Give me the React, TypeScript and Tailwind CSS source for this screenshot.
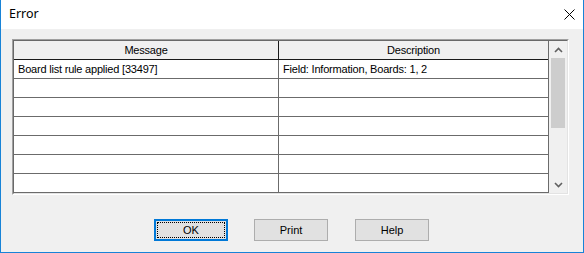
import React from 'react';

const rows = [
  { message: 'Board list rule applied [33497]', description: 'Field: Information, Boards: 1, 2' },
  { message: '', description: '' },
  { message: '', description: '' },
  { message: '', description: '' },
  { message: '', description: '' },
  { message: '', description: '' },
  { message: '', description: '' },
];

const uiFont = { fontFamily: '"Liberation Sans", Arial, sans-serif' };

const Chevron: React.FC<{ down?: boolean }> = ({ down }) => (
  <svg width="9" height="6" viewBox="0 0 9 6" className={down ? 'rotate-180' : ''}>
    <path d="M1 5 L4.5 1.5 L8 5" fill="none" stroke="#606060" strokeWidth="1.6" />
  </svg>
);

const DialogButton: React.FC<{ label: string; focused?: boolean; className?: string }> = ({ label, focused, className = '' }) => {
  if (focused) {
    return (
      <div className={`w-[74px] h-[22px] border-2 border-[#0078d7] bg-[#e1e1e1] p-px ${className}`}>
        <div className="w-full h-full border border-dotted border-black flex items-center justify-center text-[11px] text-black">
          {label}
        </div>
      </div>
    );
  }
  return (
    <div className={`w-[74px] h-[22px] border border-[#adadad] bg-[#e1e1e1] flex items-center justify-center text-[11px] text-black ${className}`}>
      {label}
    </div>
  );
};

export default function App() {
  return (
    <div
      className="w-[584px] h-[253px] flex flex-col border-x border-b border-[#1883d7] bg-[#f0f0f0] overflow-hidden"
      style={uiFont}
    >
      {/* Title bar */}
      <div className="h-[29px] shrink-0 bg-white flex items-center justify-between pl-[8px] pr-[7px]">
        <span className="text-[12.5px] text-black" style={{ fontFamily: '"Noto Sans", sans-serif' }}>
          Error
        </span>
        <svg width="11" height="11" viewBox="0 0 11 11" className="mr-[1px]">
          <path d="M0.5 0.5 L10.5 10.5 M10.5 0.5 L0.5 10.5" stroke="#000" strokeWidth="1" />
        </svg>
      </div>

      {/* List */}
      <div className="pl-[11px] pt-[10px]">
        <div className="w-[557px] h-[156px] border-t border-l border-t-[#a0a0a0] border-l-[#a0a0a0] border-b border-r border-b-white border-r-white">
          <div className="w-full h-full flex border-t border-l border-t-[#696969] border-l-[#696969] border-b border-r border-b-[#e3e3e3] border-r-[#e3e3e3]">
            <div className="w-[535px] flex flex-col border-r border-[#6b6b6b] bg-white text-[11px] tracking-[-0.2px] text-black">
              <div className="h-[19px] flex bg-[#f0f0f0] border-b border-[#1a1a1a]">
                <div className="w-[265px] border-r border-[#1a1a1a] flex items-center justify-center">Message</div>
                <div className="flex-1 flex items-center justify-center">Description</div>
              </div>
              {rows.map((row, i) => (
                <div key={i} className="h-[19px] flex border-b border-[#6b6b6b]">
                  <div className="w-[265px] border-r border-[#6b6b6b] flex items-center pl-[4px]">{row.message}</div>
                  <div className="flex-1 flex items-center pl-[4px]">{row.description}</div>
                </div>
              ))}
            </div>

            {/* Scrollbar */}
            <div className="flex-1 flex flex-col bg-[#f0f0f0]">
              <div className="h-[17px] flex items-center justify-center">
                <Chevron />
              </div>
              <div className="flex-1 px-[2px]">
                <div className="h-[70px] bg-[#cdcdcd]" />
              </div>
              <div className="h-[17px] flex items-center justify-center">
                <Chevron down />
              </div>
            </div>
          </div>
        </div>
      </div>

      {/* Buttons */}
      <div className="mt-[24px] flex pl-[153px] text-black">
        <DialogButton label="OK" focused />
        <DialogButton label="Print" className="ml-[26px]" />
        <DialogButton label="Help" className="ml-[27px]" />
      </div>
    </div>
  );
}
